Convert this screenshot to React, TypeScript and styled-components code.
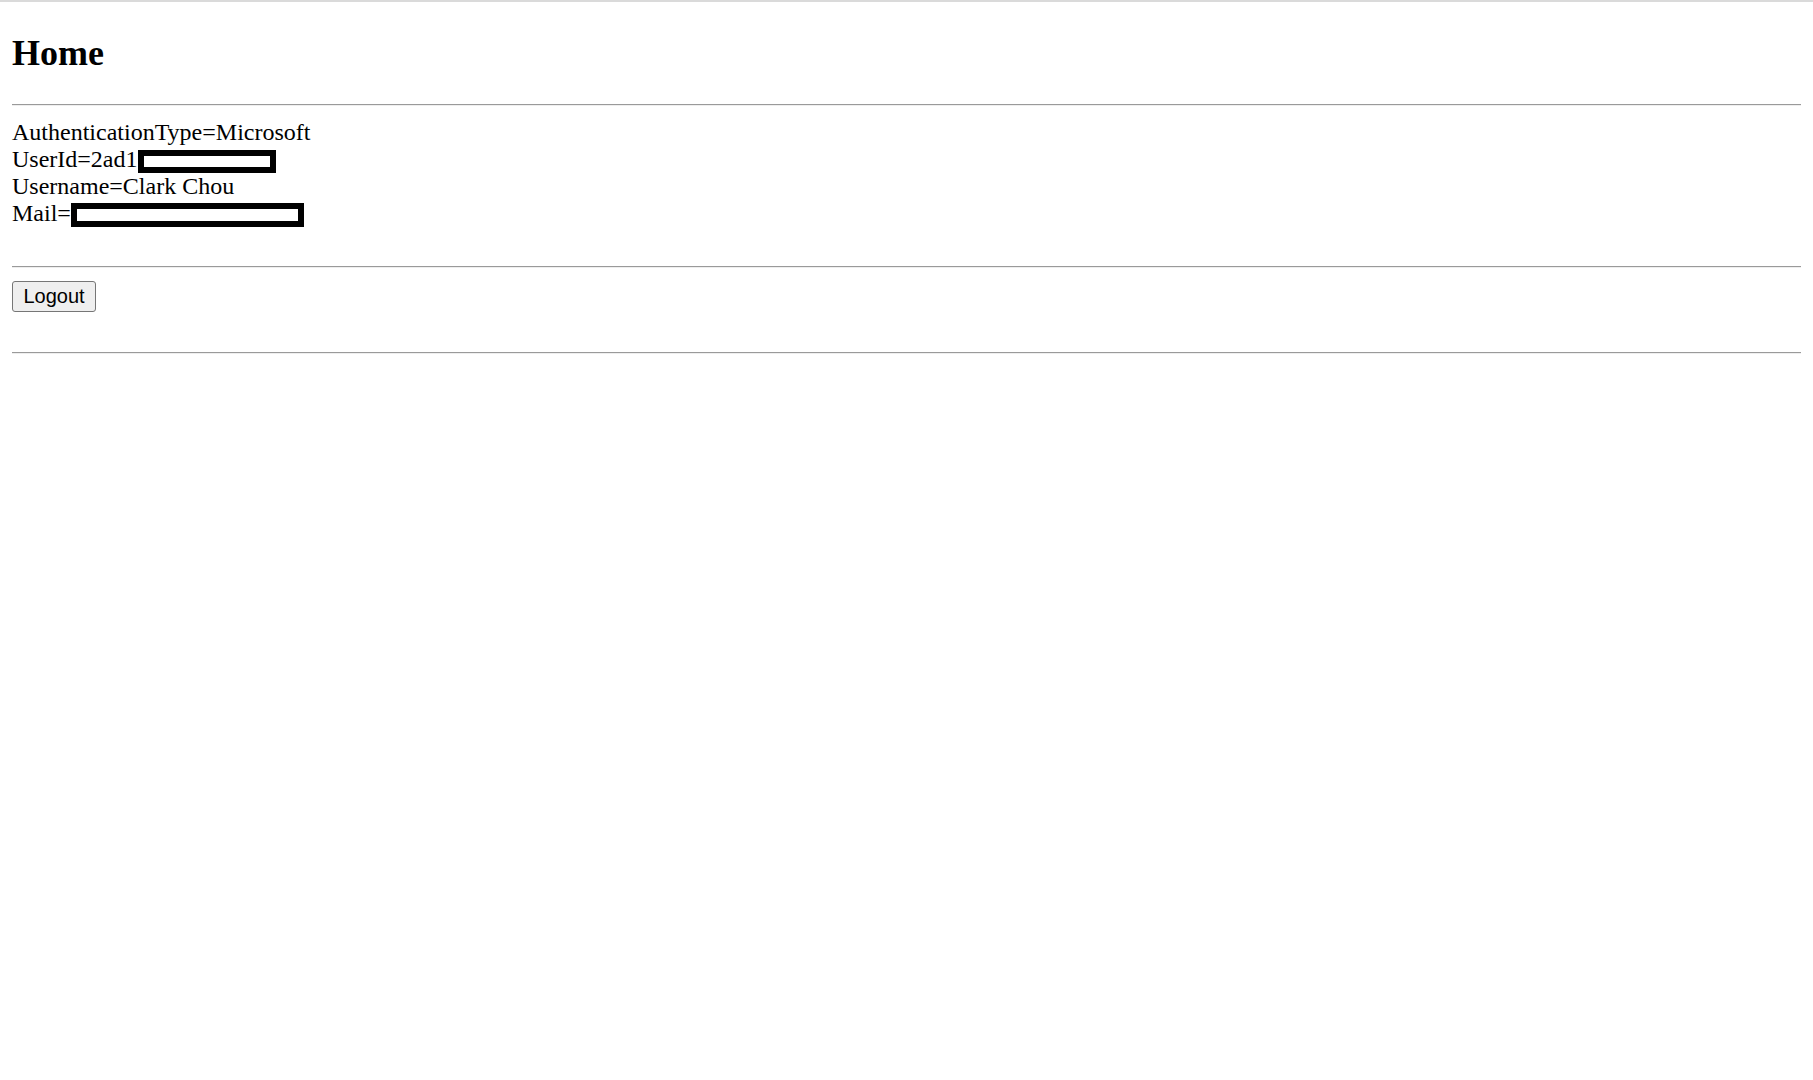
import styled, { createGlobalStyle } from "styled-components";

const GlobalStyle = createGlobalStyle`
    html, body {
        margin: 0;
        padding: 0;
        background: #ffffff;
    }

    body {
        font-family: "Liberation Serif", "Times New Roman", serif;
        color: #000000;
    }
`;

type InfoLine = {
    label: string;
    value?: string;
    redact?: "short" | "long";
};

const lines: InfoLine[] = [
    { label: "AuthenticationType", value: "Microsoft" },
    { label: "UserId", value: "2ad1", redact: "short" },
    { label: "Username", value: "Clark Chou" },
    { label: "Mail", redact: "long" },
];

function App() {
    return (
        <>
            <GlobalStyle />
            <Style_TopEdge />

            <Style_Page>
                <Style_Title>Home</Style_Title>
                <Style_Rule />

                <Style_Info>
                    {lines.map((line) => (
                        <Style_Line key={line.label}>
                            {line.label}={line.value}
                            {line.redact && <Style_Redact $size={line.redact} />}
                        </Style_Line>
                    ))}
                </Style_Info>

                <Style_Rule $gap={39.5} />

                <Style_Actions>
                    <Style_Button type="button">Logout</Style_Button>
                </Style_Actions>

                <Style_Rule $gap={39.4} />
            </Style_Page>
        </>
    );
}

export default App;

const Style_TopEdge = styled.div`
    height: 2px;
    background: #dadada;
`;

const Style_Page = styled.main`
    display: flex;
    flex-direction: column;
    padding: 0 12px;
`;

const Style_Title = styled.h2`
    margin: 30.6px 0 0;
    font-size: 36px;
    line-height: 40px;
    font-weight: 700;
`;

const Style_Rule = styled.hr<{ $gap?: number }>`
    width: 100%;
    height: 0;
    margin: ${({ $gap }) => $gap ?? 31.4}px 0 0;
    border: none;
    border-top: 1px solid #9a9a9a;
    border-bottom: 1px solid #eeeeee;
`;

const Style_Info = styled.div`
    display: flex;
    flex-direction: column;
    margin-top: 13.5px;
    font-size: 24px;
    line-height: 26.7px;
`;

const Style_Line = styled.div`
    white-space: nowrap;
`;

const Style_Redact = styled.span<{ $size: "short" | "long" }>`
    display: inline-block;
    box-sizing: border-box;
    width: ${({ $size }) => ($size === "short" ? 138 : 233)}px;
    height: ${({ $size }) => ($size === "short" ? 23.5 : 24.7)}px;
    margin: -2px 0 -2px ${({ $size }) => ($size === "short" ? 0.5 : 0.5)}px;
    vertical-align: ${({ $size }) => ($size === "short" ? -4 : -4.7)}px;
    border: 6px solid #000000;
    background: #ffffff;
`;

const Style_Actions = styled.div`
    display: flex;
    margin-top: 13.7px;
`;

const Style_Button = styled.button`
    height: 31px;
    padding: 0 10.5px;
    font-family: "Liberation Sans", Arial, sans-serif;
    font-size: 20px;
    color: #000000;
    background: #efefef;
    border: 1px solid #767676;
    border-radius: 3px;
`;
